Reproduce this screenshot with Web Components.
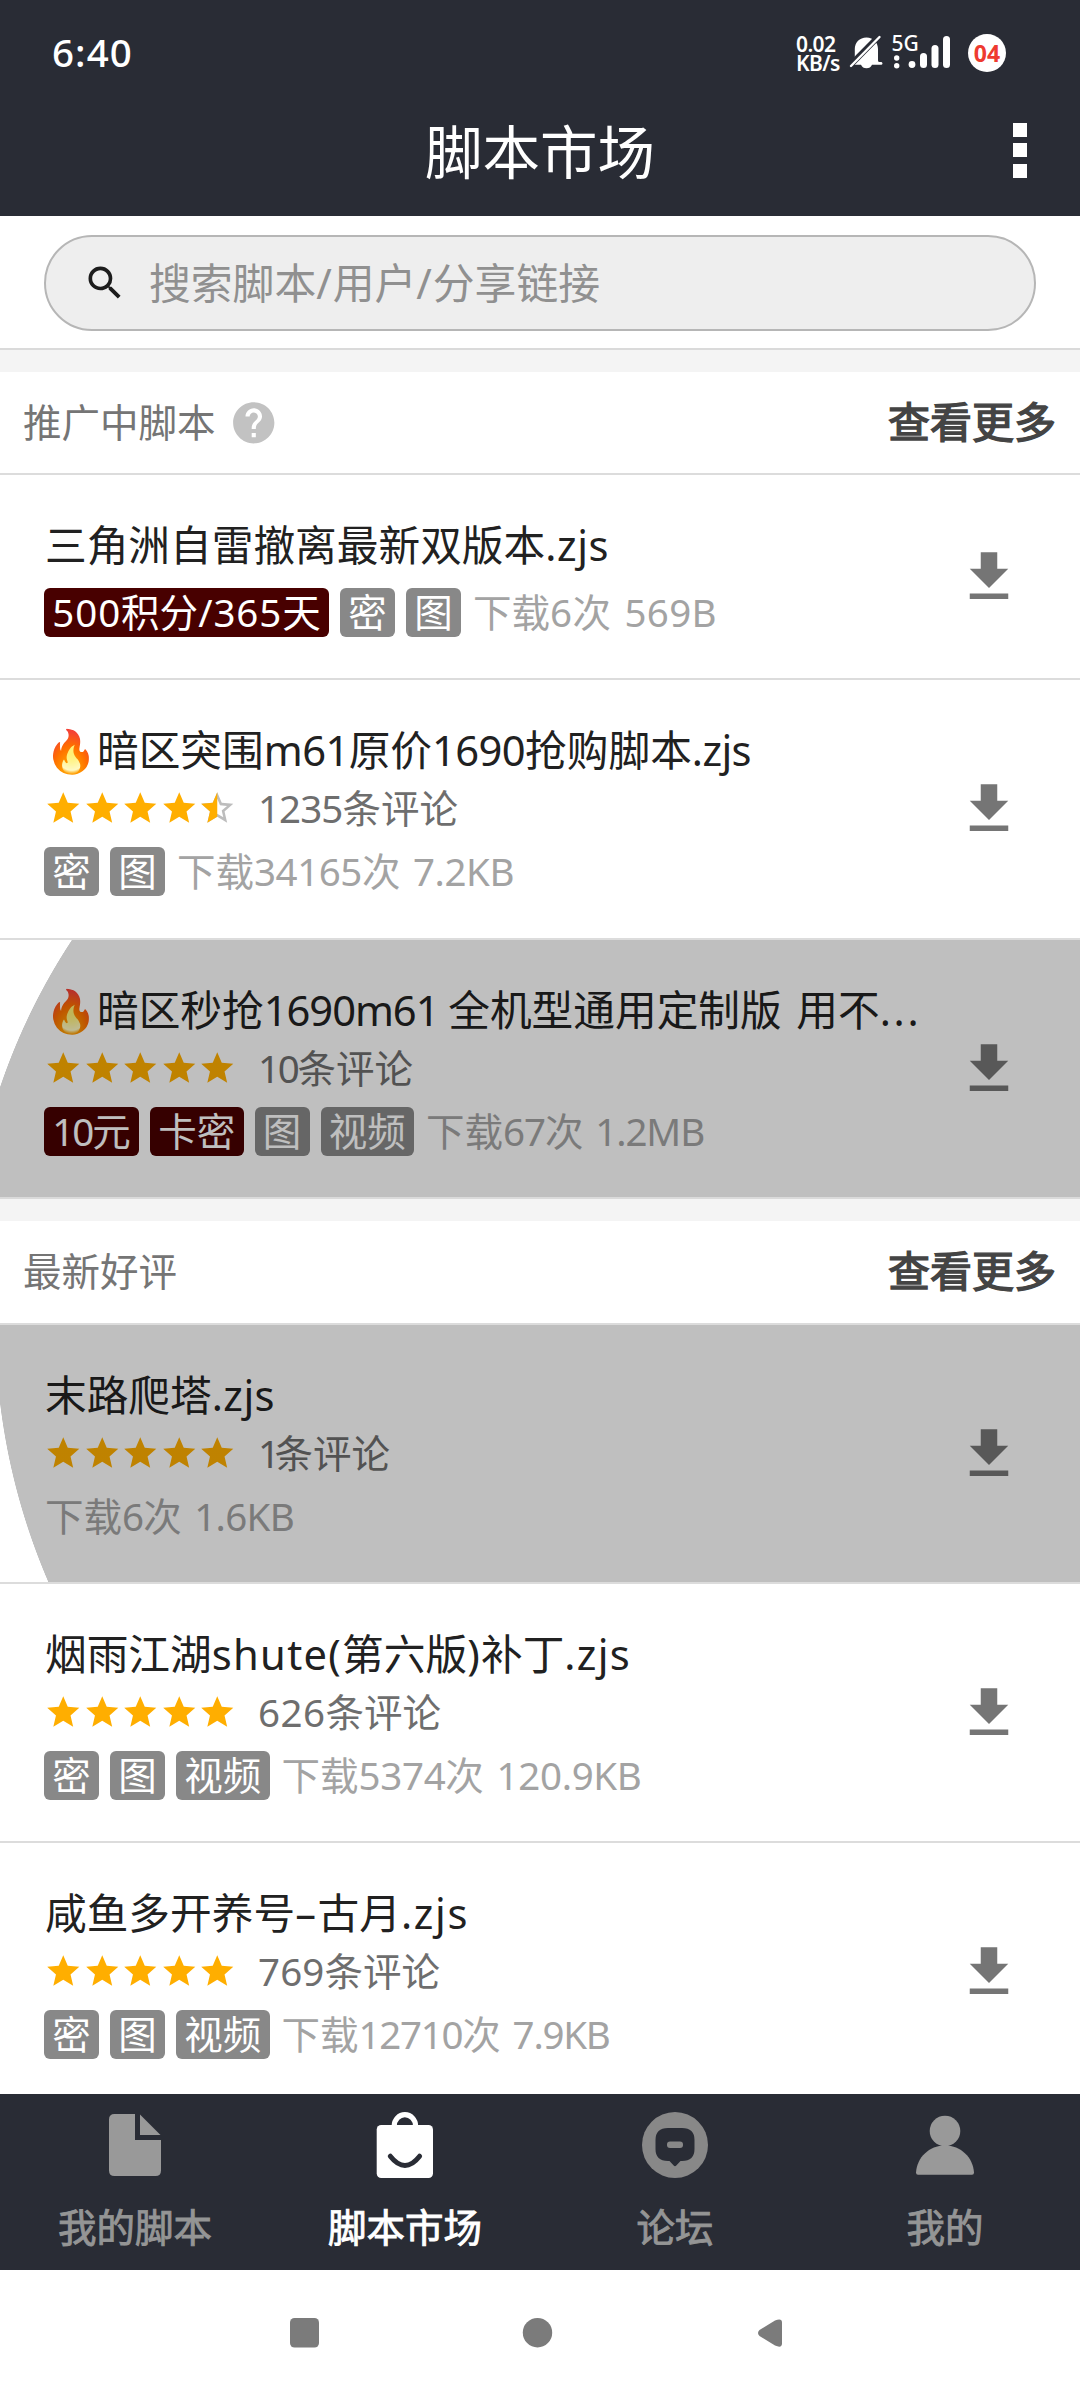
<!DOCTYPE html>
<html lang="zh-CN">
<head>
<meta charset="utf-8">
<title>脚本市场</title>
<style>
html,body{margin:0;padding:0;background:#fff}
body{width:1080px;height:2400px;overflow:hidden;font-family:"Noto Sans","Noto Sans CJK SC",sans-serif;color:#212121}
</style>
</head>
<body>
<app-screen></app-screen>
<script>
const define = (name, html, setup) => {
  const tpl = document.createElement('template');
  tpl.innerHTML = html;
  customElements.define(name, class extends HTMLElement {
    connectedCallback() {
      if (this.shadowRoot) return;
      this.attachShadow({mode: 'open'}).appendChild(tpl.content.cloneNode(true));
      if (setup) setup(this, this.shadowRoot);
    }
  });
};

// A line of mixed text; the Latin runs are tracked so that the line takes the width in "w",
// or each run the width listed for it in "ws".
define('mixed-text', `<style>:host{display:inline-block;white-space:pre;flex:none}</style>`, (host, root) => {
  const line = document.createElement('span');
  const latin = [];
  for (const part of host.getAttribute('text').split(/([\x20-\x7e–]+)/).filter(Boolean)) {
    const s = document.createElement('span');
    s.textContent = part;
    if (/^[\x20-\x7e–]/.test(part)) latin.push(s);
    line.append(s);
  }
  root.append(line);
  const track = (s, gap) => s.style.letterSpacing = gap.toFixed(3) + 'px';
  const spec = (host.getAttribute('w') || '').split(' ').map(Number);
  if (!spec[0] || !latin.length) return;
  if (spec.length > 1) {
    latin.forEach((s, i) => track(s, (spec[i] - s.getBoundingClientRect().width) / s.textContent.length));
  } else {
    const n = latin.reduce((a, s) => a + s.textContent.length, 0);
    const gap = (spec[0] - line.getBoundingClientRect().width) / n;
    latin.forEach(s => track(s, gap));
  }
});

define('status-bar', `<style>
:host{display:flex;height:106px;align-items:center;justify-content:space-between;padding:0 74px 0 52px;color:#fff;background:#292c35;box-sizing:border-box}
.time{font-size:38.500px;font-weight:500;line-height:40px;letter-spacing:1.100px;padding-bottom:2px}
.right{display:flex;align-items:center}
.net{font-size:21px;font-weight:600;line-height:19px;width:46px;white-space:nowrap;margin-right:7px;letter-spacing:-.6px;padding-top:1px}
svg{display:block}
.date{width:38px;height:38px;border-radius:50%;background:#fff;color:#ee3b30;font-size:23px;font-weight:700;display:flex;align-items:center;justify-content:center;margin-left:15px;padding-bottom:1px;box-sizing:border-box}
</style>
<div class="time">6:40</div>
<div class="right"><div class="net"><div>0.02</div><div>KB/s</div></div>
<svg width="104" height="60" viewBox="849 23 104 60" fill="#fff">
<path d="M866.500 37.500c7 0 11.500 5 11.500 11.500v11.500q0 1 1 1.500h2.500q1 .5 1 1.500t-1 1.200H872q-1.500 3.600-5.500 3.600t-5.500-3.600h-8q-1.500-.2-1-1.400l2.800-2.600V49c0-6.500 4.700-11.500 11.700-11.500z"/>
<path d="M848 67.500L880.500 34.500" stroke="#292c35" stroke-width="6"/><path d="M851 66L879.500 37" stroke="#fff" stroke-width="2.400" stroke-linecap="round"/>
<text x="891.500" y="50.500" font-size="21" font-family="Noto Sans" font-weight="500">5G</text>
<circle cx="896.700" cy="58" r="2.700"/><circle cx="896.700" cy="65.700" r="2.700"/><circle cx="912" cy="64.500" r="3.400"/>
<rect x="920" y="53" width="7" height="15" rx="3.500"/><rect x="931.500" y="45" width="7" height="23" rx="3.500"/><rect x="943" y="36" width="7" height="32" rx="3.500"/></svg>
<div class="date">04</div></div>`);

define('title-bar', `<style>
:host{display:grid;grid-template-columns:100px 1fr 100px;height:110px;align-items:center;background:#292c35;color:#fff}
.t{grid-column:2;text-align:center;font-size:57.500px;line-height:80px;padding-bottom:18px}
.m{display:flex;flex-direction:column;gap:6.500px;justify-self:start;padding:0 0 22px 33px}
i{display:block;width:14px;height:14px;background:#fff}
</style><div class="t">脚本市场</div><div class="m"><i></i><i></i><i></i></div>`);

define('search-box', `<style>
:host{display:block;height:132px;padding:19px 44px 0;box-sizing:border-box;background:#fff}
div{height:96px;box-sizing:border-box;border:2px solid #b6b6b6;border-radius:48px;background:#eee;display:flex;align-items:center;padding-left:37px;color:#909090;font-size:41.800px}
svg{margin-right:22px;flex:none}
mixed-text{padding-bottom:4px}
</style><div><svg width="44" height="44" viewBox="0 0 24 24" fill="#1c1c1c"><path d="M15.500 14h-.79l-.28-.27A6.471 6.471 0 0 0 16 9.500 6.500 6.500 0 1 0 9.500 16c1.610 0 3.090-.59 4.230-1.570l.27.28v.79l5 4.990L20.490 19l-4.990-5zm-6 0C7.010 14 5 11.990 5 9.500S7.010 5 9.500 5 14 7.010 14 9.500 11.990 14 9.500 14z"/></svg><mixed-text text="搜索脚本/用户/分享链接" w="451"></mixed-text></div>`);

define('section-head', `<style>
:host{display:flex;flex-direction:column;height:var(--h,125px);background:#fff}
.band{height:22px;flex:none;border-top:2px solid #dadada;background:#f4f4f4}
.bar{flex:1;display:flex;align-items:center;padding:0 24px 0 23px;font-size:38.500px;line-height:60px;color:#757575}
.bar>span{padding-bottom:2px}
.more{margin-left:auto;font-size:42px;color:#444;-webkit-text-stroke:1.400px #444}
</style><div class="band"></div><div class="bar"><span class="n"></span><slot></slot><span class="more">查看更多</span></div>`, (h, r) => r.querySelector('.n').textContent = h.getAttribute('name'));

define('help-icon', `<style>:host{display:block;margin-left:13px}svg{display:block}</style><svg width="49.500" height="49.500" viewBox="0 0 24 24" fill="#c2c2c2"><path d="M12 2C6.480 2 2 6.480 2 12s4.480 10 10 10 10-4.480 10-10S17.520 2 12 2zm1 17h-2v-2h2v2zm2.070-7.750l-.9.92C13.450 12.900 13 13.500 13 15h-2v-.5c0-1.100.45-2.100 1.170-2.830l1.240-1.260c.37-.36.59-.86.59-1.410 0-1.100-.9-2-2-2s-2 .9-2 2H8c0-2.210 1.790-4 4-4s4 1.790 4 4c0 .88-.36 1.680-.93 2.250z"/></svg>`);

define('star-rating', `<style>:host{display:flex}svg{display:block}</style>`, (h, r) => {
  const full = 'M12 17.270L18.180 21l-1.640-7.030L22 9.240l-7.190-.61L12 2 9.190 8.630 2 9.240l5.460 4.730L5.820 21z';
  const line = 'M22 9.240l-7.190-.62L12 2 9.190 8.630 2 9.240l5.460 4.730L5.820 21 12 17.270 18.180 21l-1.630-7.030L22 9.240zM12 15.400l-3.760 2.270 1-4.280-3.320-2.880 4.380-.38L12 6.100l1.710 4.040 4.380.38-3.320 2.880 1 4.280L12 15.400z';
  const v = +h.getAttribute('value');
  for (let i = 1; i <= 5; i++) {
    const d = document.createElement('div');
    d.innerHTML = '<svg width="38.500" height="38.500" viewBox="0 0 24 24">' + (v >= i ? `<path fill="#ffae00" d="${full}"/>`
      : `<path fill="#bdbdbd" d="${line}"/><path fill="#ffae00" d="M12 2L9.190 8.630 2 9.240l5.460 4.730L5.820 21 12 17.270z"/>`) + '</svg>';
    r.append(d);
  }
});

define('tag-badge', `<style>
:host{display:flex;align-items:center;justify-content:center;flex:none;height:49px;padding:0 8.250px;margin-right:11px;border-radius:6px;background:#888;color:#fff;font-size:38.500px;line-height:49px}
:host([paid]){background:#480000}
</style>`, (h, r) => {
  const t = document.createElement('mixed-text');
  t.setAttribute('text', h.getAttribute('text'));
  if (h.hasAttribute('w')) t.setAttribute('w', h.getAttribute('w'));
  r.append(t);
});

define('script-row', `<style>
:host{display:flex;position:relative;justify-content:space-between;align-items:center;box-sizing:border-box;padding:0 58px 0 44px;border-top:2px solid #dcdcdc;background:#fff;flex:none;height:var(--h,259px)}
.body{align-self:flex-start;padding-top:41px}
.title{height:58px;display:flex;align-items:center;font-size:41.700px;color:#212121;line-height:58px;padding-left:1px}
.review{height:54px;display:flex;align-items:center;gap:21.500px;color:#6e6e6e;font-size:38.500px;line-height:50px;padding-top:5px;box-sizing:border-box}
.review mixed-text{padding-bottom:2px}
.meta{height:49px;margin-top:14px;display:flex;align-items:center;color:#a3a3a3;font-size:38.500px;line-height:49px}
.meta>mixed-text{word-spacing:3px;margin-left:1px}
:host([ripple])::after{content:"";position:absolute;inset:0;background:radial-gradient(circle var(--r) at var(--c),rgba(0,0,0,.25) 99.900%,transparent 100%)}
</style>
<div class="body"><div class="title"></div><div class="review"></div><div class="meta"><slot></slot></div></div>
<svg width="66" height="66" viewBox="0 0 24 24" fill="#757575"><path d="M19 9h-4V3H9v6H5l7 7 7-7zM5 18v2h14v-2H5z"/></svg>`, (h, r) => {
  const text = (sel, t, w) => { const e = document.createElement('mixed-text'); e.setAttribute('text', t); e.setAttribute('w', w); r.querySelector(sel).append(e); };
  const a = n => h.getAttribute(n);
  text('.title', a('name'), a('name-w'));
  if (a('reviews')) {
    const s = document.createElement('star-rating'); s.setAttribute('value', a('stars')); r.querySelector('.review').append(s);
    text('.review', a('reviews'), a('reviews-w'));
  } else r.querySelector('.review').remove();
  text('.meta', a('info'), a('info-w'));
});

define('nav-item', `<style>
:host{display:flex;flex-direction:column;align-items:center;width:270px;color:#949595;font-size:38.500px;padding-top:12px;box-sizing:border-box}
:host([active]){color:#fff}
span{line-height:56px;margin-top:13px;-webkit-text-stroke:.9px currentColor}
</style><slot></slot><span></span>`, (h, r) => r.querySelector('span').textContent = h.getAttribute('label'));

define('app-screen', `<style>
:host{display:flex;flex-direction:column;height:2400px;width:1080px;background:#fff}
main{flex:none;height:1878px;overflow:hidden;display:flex;flex-direction:column}
main>*{flex:none}
nav{display:flex;height:176px;flex:none;background:#292c35}
nav svg{display:block}
footer{flex:1;display:flex;align-items:center;justify-content:center;padding:0 4px 5px 0}
</style>
<status-bar></status-bar><title-bar></title-bar>
<main>
<search-box></search-box>
<section-head name="推广中脚本"><help-icon></help-icon></section-head>
<script-row style="--h:205px" name="三角洲自雷撤离最新双版本.zjs" name-w="564" info="下载6次 569B" info-w="244"><tag-badge paid text="500积分/365天" w="268.500"></tag-badge><tag-badge text="密"></tag-badge><tag-badge text="图"></tag-badge></script-row>
<script-row style="--h:260px" name="🔥暗区突围m61原价1690抢购脚本.zjs" name-w="706" stars="4.500" reviews="1235条评论" reviews-w="200" info="下载34165次 7.2KB" info-w="337"><tag-badge text="密"></tag-badge><tag-badge text="图"></tag-badge></script-row>
<script-row ripple style="--r:640px;--c:606px 352px" name="🔥暗区秒抢1690m61 全机型通用定制版 用不..." name-w="184.500 14.500 42" stars="5" reviews="10条评论" reviews-w="155" info="下载67次 1.2MB" info-w="278"><tag-badge paid text="10元" w="78.500"></tag-badge><tag-badge paid text="卡密"></tag-badge><tag-badge text="图"></tag-badge><tag-badge text="视频"></tag-badge></script-row>
<section-head name="最新好评" style="--h:126px"></section-head>
<script-row ripple style="--r:650px;--c:645px 0px" name="末路爬塔.zjs" name-w="230" stars="5" reviews="1条评论" reviews-w="132" info="下载6次 1.6KB" info-w="249"></script-row>
<script-row name="烟雨江湖shute(第六版)补丁.zjs" name-w="586" stars="5" reviews="626条评论" reviews-w="183" info="下载5374次 120.9KB" info-w="360"><tag-badge text="密"></tag-badge><tag-badge text="图"></tag-badge><tag-badge text="视频"></tag-badge></script-row>
<script-row name="咸鱼多开养号–古月.zjs" name-w="424" stars="5" reviews="769条评论" reviews-w="182" info="下载12710次 7.9KB" info-w="328"><tag-badge text="密"></tag-badge><tag-badge text="图"></tag-badge><tag-badge text="视频"></tag-badge></script-row>
</main>
<nav>
<nav-item label="我的脚本"><svg width="80" height="80" viewBox="95 2106 80 80" fill="#999"><path d="M114.500 2114H135v26h26v30.500q0 5.500-5.500 5.500h-41q-5.500 0-5.500-5.500v-51q0-5.500 5.500-5.500z"/><path d="M140 2114.500L160.500 2135H140z"/></svg></nav-item>
<nav-item label="脚本市场" active><svg width="80" height="80" viewBox="365 2106 80 80" fill="#fff"><rect x="376.700" y="2125" width="56.300" height="53" rx="4.500"/><path d="M394.200 2126a10.700 11.300 0 0 1 21.400 0" fill="none" stroke="#fff" stroke-width="5.200"/><path d="M390.300 2156.200q14.700 18.600 29.300 0" fill="none" stroke="#292c35" stroke-width="5" stroke-linecap="round"/></svg></nav-item>
<nav-item label="论坛"><svg width="80" height="80" viewBox="635 2106 80 80" fill="#888"><circle cx="675" cy="2145" r="33"/><path fill="#292c35" d="M668 2128h14q12.500 0 12.500 12v9q0 12-12.500 12h-1.500l-4.200 4.600q-1.300 1.100-2.600 0l-4.200-4.600H668q-12.500 0-12.500-12v-9q0-12 12.500-12z"/><rect x="667" y="2141.500" width="16" height="6.500" rx="3"/></svg></nav-item>
<nav-item label="我的"><svg width="80" height="80" viewBox="905 2106 80 80" fill="#999"><circle cx="945" cy="2131" r="15.300"/><path d="M945 2145.500c16 0 28 12 29 27q0 2.200-2 2.200h-54q-2 0-2-2.200c1-15 13-27 29-27z"/></svg></nav-item>
</nav>
<footer><svg width="500" height="34" viewBox="288 2316 500 34" fill="#7b7b7b"><rect x="290" y="2318" width="29" height="29.500" rx="4.500"/><circle cx="537.500" cy="2332.700" r="14.700"/><path d="M759.500 2330L775 2320.500q7-3 7 2v21q0 5-7 2L759.500 2336q-3-3 0-6z"/></svg></footer>`);
</script>
</body>
</html>
